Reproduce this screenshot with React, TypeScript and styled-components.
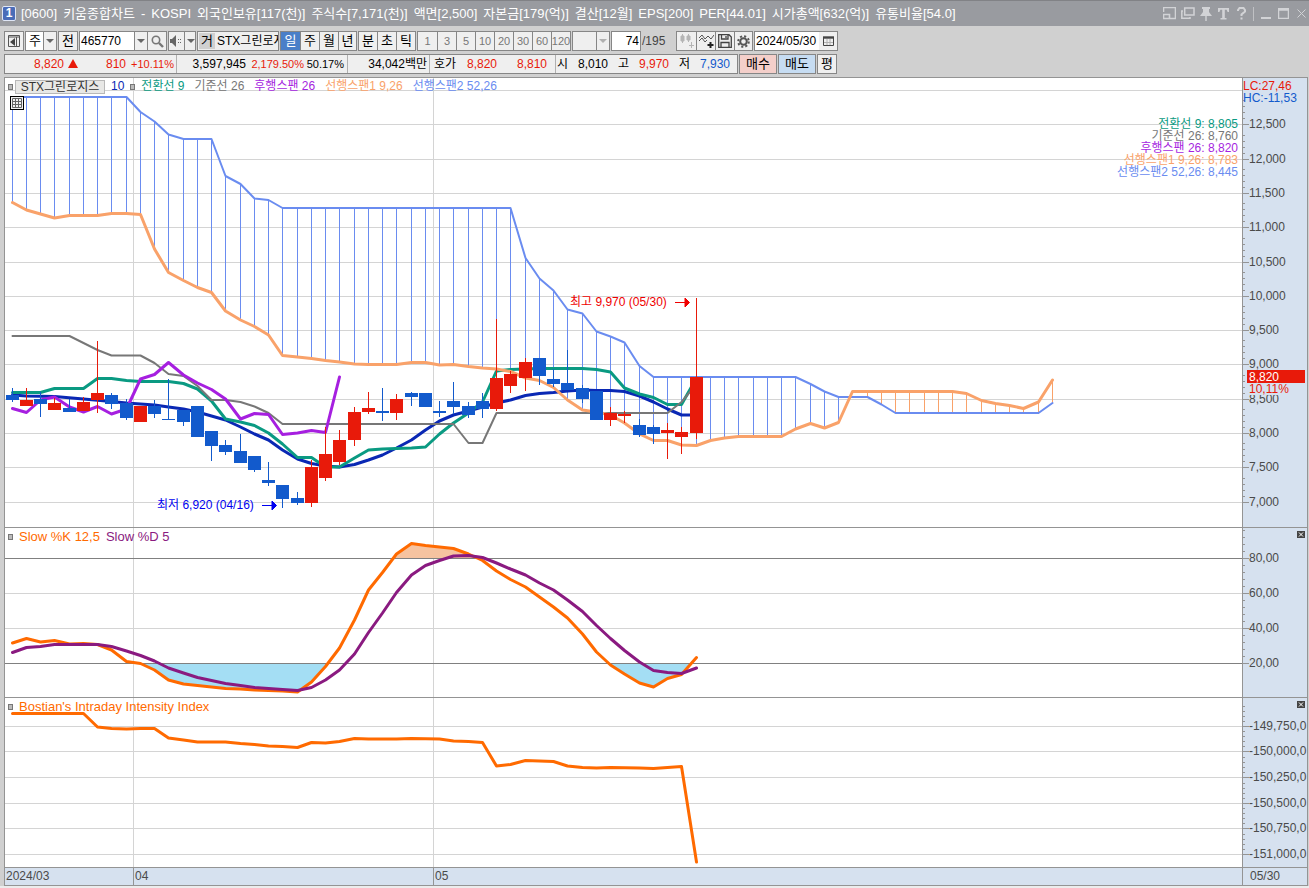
import React from 'react';
import styled, { createGlobalStyle } from 'styled-components';

const SANS = `'Liberation Sans', 'Noto Sans CJK KR', sans-serif`;

const C = {
  up: '#e81a0a',
  down: '#125acc',
  conv: '#0a9a82',
  base: '#777777',
  lag: '#a61fe0',
  spanA: '#f9a26a',
  spanB: '#6a8cf0',
  ma: '#0a28b4',
  grid: '#d4d4d4',
  frame: '#949494',
  axis: '#d6e1ef',
  k: '#ff6a00',
  d: '#8a1a80',
  ink: '#4a4a4a',
};

const Global = createGlobalStyle`
  *, *::before, *::after { box-sizing: border-box; }
  body { margin: 0; background: #ececec; font: 12px/12px ${SANS}; color: #000; }
  button, input, select { font: inherit; color: inherit; margin: 0; padding: 0; border-radius: 0; }
`;

/* ---------- window chrome ---------- */

const Window = styled.div`
  min-height: 100vh;
  display: flex;
  flex-direction: column;
  background: #d0d0d0;
  white-space: nowrap;
  overflow: hidden;
`;

const TitleBar = styled.header`
  display: flex;
  align-items: center;
  height: 26px;
  padding-left: 2px;
  border-top: 1px solid #818286;
  background: #999ba0;
  color: #fff;
`;

const Badge = styled.span`
  width: 14px;
  height: 15px;
  border: 1px solid #dfe6f5;
  border-radius: 2px;
  background: #4a6cb8;
  font-weight: bold;
  line-height: 13px;
  text-align: center;
`;

const Title = styled.h1`
  flex: 1;
  display: flex;
  gap: 6px;
  margin: 0 0 0 5px;
  font-size: 13px;
  font-weight: normal;
  line-height: 16px;
`;

const TitleTools = styled.div`
  display: flex;
  align-items: center;
  gap: 3px;
`;

const TitleButton = styled.button`
  display: flex;
  justify-content: center;
  width: 15px;
  border: 0;
  background: none;
  color: #d2d3d6;
`;

const TitleRule = styled.span`
  width: 1px;
  height: 14px;
  margin: 0 1px;
  background: #c0c1c4;
`;

const ToolRow = styled.div`
  display: flex;
  gap: 1px;
  height: 20px;
  margin: 5px 4px 0;
`;

const QuoteRow = styled(ToolRow)`
  margin: 3px 4px 3px;
`;

const Group = styled.div<{ $width?: number; $white?: boolean }>`
  display: flex;
  flex: none;
  width: ${(p) => (p.$width ? `${p.$width}px` : 'auto')};
  height: 20px;
  overflow: hidden;
  border: 1px solid #868686;
  background: ${(p) => (p.$white ? '#fff' : '#efefef')};
  > button + button, > span + button { border-left: 1px solid #868686; }
`;

const ToolButton = styled.button<{ $width?: number; $active?: boolean; $dim?: boolean; $tone?: string; $framed?: boolean }>`
  display: flex;
  align-items: center;
  justify-content: center;
  width: ${(p) => p.$width ?? 19}px;
  flex: none;
  height: ${(p) => (p.$framed ? 20 : 18)}px;
  border: ${(p) => (p.$framed ? '1px solid #868686' : '0')};
  background: ${(p) => (p.$active ? '#4a7fc8' : p.$tone ?? '#efefef')};
  color: ${(p) => (p.$active ? '#fff' : p.$dim ? '#777' : '#000')};
  font-size: ${(p) => (p.$dim ? 11 : 13)}px;
`;

const Select = styled.select<{ $width: number }>`
  width: ${(p) => p.$width}px;
  height: 18px;
  padding-left: 3px;
  border: 0;
  background: transparent;
  appearance: none;
  font-size: 13px;
`;

const Arrow = styled.span<{ $dim?: boolean }>`
  display: flex;
  align-items: center;
  justify-content: center;
  width: 13px;
  flex: none;
  border-left: 1px solid #868686;
  background: #efefef;
  &::after {
    content: '';
    border: 4px solid transparent;
    border-top-color: ${(p) => (p.$dim ? '#b0b0b0' : '#666')};
    border-bottom: 0;
  }
`;

const Field = styled.input<{ $right?: boolean }>`
  flex: 1;
  min-width: 0;
  height: 18px;
  padding: 0 1px;
  border: 0;
  outline: 0;
  background: #fff;
  text-align: ${(p) => (p.$right ? 'right' : 'left')};
`;

const NameTag = styled.span`
  width: 16px;
  height: 16px;
  flex: none;
  margin: 1px 2px 1px 1px;
  background: #d0d0d0;
  font-size: 13px;
  line-height: 16px;
  text-align: center;
`;

const StockName = styled.span`
  flex: 1;
  min-width: 0;
  overflow: hidden;
  line-height: 18px;
`;

const Count = styled.span`
  width: 33px;
  color: #444;
  line-height: 20px;
`;

/* ---------- quote strip ---------- */

const Quotes = styled.div`
  display: flex;
  width: 734px;
  height: 20px;
  border: 1px solid #868686;
  background: #efefef;
  line-height: 18px;
  > div + div { border-left: 1px solid #b0b0b0; }
`;

const QuoteCell = styled.div<{ $width: number }>`
  display: flex;
  width: ${(p) => p.$width}px;
  flex: none;
`;

const Figure = styled.span<{ $width: number; $tone?: string; $percent?: boolean }>`
  width: ${(p) => p.$width}px;
  flex: none;
  color: ${(p) => p.$tone ?? '#000'};
  font-size: ${(p) => (p.$percent ? 11 : 12)}px;
  text-align: right;
`;

/* ---------- chart ---------- */

const Chart = styled.main`
  margin: 0 1px 0 4px;
  border: 1px solid ${C.frame};
  background: #fff;
`;

const Panel = styled.section<{ $height: number }>`
  display: flex;
  height: ${(p) => p.$height}px;
  border-bottom: 1px solid ${C.frame};
`;

const Plot = styled.div`
  position: relative;
  flex: 1;
  min-width: 0;
`;

const Scale = styled.div`
  position: relative;
  width: 65px;
  border-left: 1px solid ${C.frame};
  background: ${C.axis};
`;

const Svg = styled.svg`
  display: block;
  width: 100%;
  height: 100%;
  overflow: hidden;
  text { font-family: ${SANS}; font-size: 12px; }
`;

const Legend = styled.div<{ $size?: number }>`
  position: absolute;
  top: 1px;
  left: 3px;
  display: flex;
  align-items: center;
  gap: 6px;
  height: 15px;
  font-size: ${(p) => p.$size ?? 12}px;
  line-height: 15px;
`;

const SeriesHead = styled.div`
  display: flex;
  align-items: center;
  gap: 2px;
`;

const Keys = styled.div`
  display: flex;
  gap: 10px;
`;

const Handle = styled.button`
  width: 5px;
  height: 6px;
  flex: none;
  border: 1px solid #777;
  background: #bbb;
`;

const SeriesButton = styled.button`
  width: 90px;
  height: 14px;
  border: 1px solid #b8b8b8;
  background: #e8e8e6;
  color: #333;
  line-height: 12px;
`;

const Key = styled.span<{ $tone: string }>`
  color: ${(p) => p.$tone};
`;

const TableButton = styled.button`
  position: absolute;
  top: 18px;
  left: 5px;
  display: flex;
  align-items: center;
  justify-content: center;
  width: 14px;
  height: 14px;
  border: 1px solid #000;
  background: #f2f2f2;
`;

const Readout = styled.ul`
  position: absolute;
  top: 40px;
  right: 4px;
  margin: 0;
  padding: 0;
  list-style: none;
  line-height: 12px;
  text-align: right;
`;

const CloseButton = styled.button`
  position: absolute;
  top: 3px;
  right: 2px;
  display: flex;
  width: 8px;
  height: 7px;
  border: 0;
  background: #444;
`;

const TimeAxis = styled.footer`
  display: flex;
  height: 17px;
  background: ${C.axis};
  color: ${C.ink};
  line-height: 16px;
  > span + span { border-left: 1px solid ${C.frame}; }
`;

const Month = styled.span<{ $width?: number }>`
  width: ${(p) => (p.$width ? `${p.$width}px` : 'auto')};
  flex: ${(p) => (p.$width ? 'none' : 1)};
  padding-left: 1px;
`;

const LastDay = styled.span`
  width: 65px;
  padding-left: 7px;
`;

const Below = styled.div`
  flex: 1;
  min-height: 2px;
  background: #ececec;
`;

/* ---------- data: [bar index, y] on the shared chart canvas ---------- */

type Pt = [number, number];

const barX = (i: number) => Math.floor(12 + 14.25 * i);
const points = (pts: Pt[]) => pts.map(([i, y]) => `${barX(i) + 0.5},${y}`).join(' ');

const valueAt = (pts: Pt[], i: number) => {
  const n = pts.findIndex(([k]) => k >= i);
  if (pts[n][0] === i) return pts[n][1];
  const [a, ya] = pts[n - 1];
  const [b, yb] = pts[n];
  return ya + ((yb - ya) * (i - a)) / (b - a);
};

const spanA: Pt[] = [[0, 202.5], [1, 210], [2, 214], [3, 218], [4, 215.5], [6, 215.5], [7, 213.5], [8, 213.5], [9, 214.5], [10, 249], [11, 272.5], [12, 280.5], [13, 287.5], [14, 292.5], [15, 311], [16, 320], [17, 326.5], [18, 335], [19, 355.5], [20, 357], [21, 358.5], [22, 360.5], [23, 362], [24, 364], [25, 364.5], [27, 364.5], [28, 362.5], [29, 362.5], [30, 365], [31, 364.5], [32, 366.5], [33, 368], [34, 369], [35, 371.5], [36, 378], [37, 380.5], [38, 387.5], [39, 400], [40, 410], [41, 412], [42, 415], [43, 423], [44, 434], [45, 440.5], [46, 440.5], [47, 445], [48, 445.5], [49, 440.5], [50, 438], [51, 436.5], [54, 436.5], [55, 429], [56, 423.5], [57, 428], [58, 422.5], [59, 391.5], [66, 391.5], [67, 393.5], [68, 400.5], [69, 403.5], [70, 405.5], [71, 408.5], [72, 402], [73, 380]];
const spanB: Pt[] = [[0, 97], [8, 97], [9, 112], [10, 121.5], [11, 134.5], [12, 139], [14, 139], [15, 176], [16, 184], [17, 198.5], [18, 200], [19, 208], [35, 208], [36, 258], [37, 278.5], [38, 290.5], [39, 309.5], [40, 313.5], [41, 331.5], [42, 336.5], [43, 342.5], [44, 366], [45, 377], [55, 377], [56, 384], [57, 391.5], [58, 397], [60, 397], [61, 404.5], [62, 413], [72, 413], [73, 403]];
const movingAvg: Pt[] = [[0, 395], [1, 396], [3, 396.5], [5, 399], [7, 401.5], [8, 403], [9, 404], [10, 405], [11, 407], [12, 409], [13, 412], [14, 416], [15, 420], [16, 427], [17, 434], [18, 440], [19, 450], [20, 459], [21, 463.5], [22, 466], [23, 467], [24, 464.5], [25, 460], [26, 455], [27, 448], [28, 440], [29, 430], [30, 421], [31, 415], [32, 411], [33, 407], [34, 403], [35, 400], [36, 395.5], [37, 393.5], [38, 392.5], [39, 391], [40, 390], [41, 390.5], [42, 390.5], [43, 391.5], [44, 396], [45, 402], [46, 409], [47, 415], [48, 415]];
const conversion: Pt[] = [[0, 392.5], [2, 392.5], [3, 388.5], [5, 388.5], [6, 378.5], [7, 378.5], [8, 380.5], [9, 381.5], [11, 381.5], [12, 383.5], [13, 389], [14, 401], [15, 419], [16, 422], [17, 425.5], [18, 433], [19, 444], [20, 457.5], [21, 457.5], [22, 467], [23, 467], [24, 458], [25, 450], [26, 449], [27, 448.5], [28, 448], [29, 447], [30, 434], [31, 423], [32, 413], [33, 402], [34, 371], [35, 369.5], [37, 368.5], [40, 368.5], [41, 369.5], [42, 372], [43, 388], [44, 394], [45, 397.5], [46, 404.5], [47, 404.5], [48, 378]];
const baseline: Pt[] = [[0, 336], [4, 336], [5, 343], [6, 350], [7, 355.5], [9, 355.5], [10, 363], [11, 374], [12, 376], [13, 386], [14, 400], [15, 400], [16, 402], [17, 406.5], [18, 413], [19, 424], [31, 424], [32, 443], [33, 443], [34, 413], [46, 413], [47, 402], [48, 384]];
const lagging: Pt[] = [[0, 408.5], [1, 412.5], [2, 400], [3, 397], [4, 407], [5, 412], [6, 406.5], [7, 414], [8, 409], [9, 379], [10, 374.5], [11, 362.5], [12, 375], [13, 383], [14, 389.5], [15, 399], [16, 419], [17, 413.5], [18, 414.5], [19, 434.5], [20, 433], [21, 430.5], [22, 432.5], [23, 377]];

const slowK: Pt[] = [[0, 643], [1, 638.5], [2, 642], [3, 640.5], [4, 644], [5, 643.5], [6, 644.5], [7, 650], [8, 661.5], [9, 663.5], [10, 670], [11, 680], [12, 684], [13, 685.5], [14, 687], [15, 688.5], [16, 689], [17, 690], [18, 690.5], [19, 691], [20, 692], [21, 682], [22, 666.5], [23, 648], [24, 620], [25, 590], [26, 572.5], [27, 554], [28, 543.5], [29, 545.5], [30, 547], [31, 548.5], [32, 554], [33, 560.5], [34, 571], [35, 579.5], [36, 587], [37, 597], [38, 607], [39, 618], [40, 634], [41, 652], [42, 665], [43, 674], [44, 683], [45, 687], [46, 678.5], [47, 674.5], [48, 657.5]];
const slowD: Pt[] = [[0, 652.5], [1, 647.5], [2, 646.5], [3, 644.5], [6, 644.5], [7, 646.5], [8, 651], [9, 655.5], [10, 661], [11, 668], [12, 673], [13, 677.5], [14, 680.5], [15, 683.5], [16, 685.5], [17, 687.5], [18, 688.5], [19, 689.5], [20, 690.5], [21, 687.5], [22, 680], [23, 670], [24, 654], [25, 632.5], [26, 613], [27, 592.5], [28, 575], [29, 565.5], [30, 560.5], [31, 556], [32, 555.5], [33, 557.5], [34, 563], [35, 569], [36, 575], [37, 583], [38, 590], [39, 600], [40, 611.5], [41, 625.5], [42, 638.5], [43, 650.5], [44, 662], [45, 670.5], [46, 672.5], [47, 673.5], [48, 668]];
const intensity: Pt[] = [[0, 713.5], [5, 713.5], [6, 727], [7, 728.5], [8, 729], [9, 728.5], [10, 728.5], [11, 738], [12, 740], [13, 742], [15, 742], [16, 743.5], [17, 744.5], [18, 746], [19, 746.5], [20, 747.5], [21, 742.5], [22, 743], [23, 741.5], [24, 738.5], [25, 739], [27, 739], [28, 738.5], [30, 739], [31, 741], [32, 741.5], [33, 742.5], [34, 766], [35, 764.5], [36, 760.5], [38, 761.5], [39, 766], [40, 767.5], [41, 768], [42, 767.5], [44, 768], [45, 768.5], [46, 767.5], [47, 766.5], [48, 862]];

/* [direction, wick top, body top, body bottom, wick bottom] */
type Candle = ['u' | 'd', number, number, number, number];
const candles: Candle[] = [
  ['d', 388, 395, 400, 402], ['u', 388, 400, 406, 406], ['d', 392, 399, 404, 417], ['u', 398, 403, 410, 410],
  ['d', 399, 408, 412, 412], ['u', 397, 402, 411, 411], ['u', 341, 393, 400, 413], ['d', 393, 395, 404, 409],
  ['d', 399, 403, 418, 420], ['u', 406, 406, 422, 422], ['d', 400, 406, 414, 418], ['d', 379, 419, 420, 420],
  ['d', 410, 410, 422, 426], ['d', 406, 406, 437, 437], ['d', 431, 431, 446, 461], ['d', 440, 445, 452, 455],
  ['d', 434, 451, 463, 463], ['d', 456, 456, 470, 472], ['d', 462, 480, 483, 486], ['d', 485, 485, 499, 508],
  ['d', 492, 498, 503, 505], ['u', 460, 467, 503, 507], ['u', 427, 454, 478, 481], ['u', 430, 440, 462, 465],
  ['u', 407, 412, 440, 446], ['u', 392, 408, 412, 414], ['d', 388, 411, 413, 421], ['u', 394, 399, 413, 420],
  ['d', 392, 393, 397, 406], ['d', 393, 393, 407, 407], ['d', 401, 411, 413, 417], ['d', 382, 401, 407, 414],
  ['d', 402, 406, 415, 418], ['d', 393, 401, 409, 418], ['u', 319, 378, 409, 411], ['u', 371, 374, 386, 393],
  ['u', 358, 362, 378, 391], ['d', 358, 358, 376, 385], ['d', 369, 379, 384, 387], ['d', 350, 383, 390, 390],
  ['d', 385, 388, 399, 403], ['d', 391, 391, 420, 420], ['u', 407, 413, 420, 426], ['u', 411, 414, 416, 423],
  ['d', 419, 425, 435, 437], ['d', 425, 427, 434, 444], ['u', 423, 430, 433, 459], ['u', 427, 432, 437, 454],
  ['u', 298, 377, 433, 439],
];

const priceMarks: [number, string][] = [[124, '12,500'], [159, '12,000'], [193, '11,500'], [227, '11,000'], [262, '10,500'], [296, '10,000'], [330, '9,500'], [364, '9,000'], [399, '8,500'], [433, '8,000'], [467, '7,500'], [502, '7,000']];
const slowMarks: [number, string][] = [[558, '80,00'], [593, '60,00'], [628, '40,00'], [663, '20,00']];
const intensityMarks: [number, string][] = [[726, '-149,750,0'], [751, '-150,000,0'], [777, '-150,250,0'], [803, '-150,500,0'], [828, '-150,750,0'], [854, '-151,000,0']];

const LEFT = 5;
const PRICE_TOP = 78;
const SLOW_TOP = 528;
const INTENSITY_TOP = 698;

/* ---------- chart pieces ---------- */

function Grid({ top, rows, strong = [] }: { top: number; rows: number[]; strong?: number[] }) {
  return (
    <g shapeRendering="crispEdges">
      {rows.map((y) => (
        <line key={y} x1="0" x2="100%" y1={y - top + 0.5} y2={y - top + 0.5} stroke={C.grid} />
      ))}
      {[133, 433].map((x) => (
        <line key={x} x1={x - LEFT + 0.5} x2={x - LEFT + 0.5} y1="0" y2="100%" stroke={C.grid} />
      ))}
      {strong.map((y) => (
        <line key={y} x1="0" x2="100%" y1={y - top + 0.5} y2={y - top + 0.5} stroke="#808080" />
      ))}
    </g>
  );
}

function Line({ data, tone, width = 3 }: { data: Pt[]; tone: string; width?: number }) {
  return <polyline points={points(data)} fill="none" stroke={tone} strokeWidth={width} strokeLinejoin="round" strokeLinecap="round" />;
}

function Ticks({ top, marks, step }: { top: number; marks: [number, string][]; step: number }) {
  return (
    <g>
      {marks.map(([y, label]) => (
        <g key={label}>
          <g stroke={C.frame} shapeRendering="crispEdges">
            <line x1="0" x2="6" y1={y - top + 0.5} y2={y - top + 0.5} />
            {[1, 2, 3, 4].map((n) => (
              <line key={n} x1="0" x2="2" y1={y - top - n * step + 0.5} y2={y - top - n * step + 0.5} />
            ))}
          </g>
          <text x="6" y={y - top + 4} fill={C.ink}>{label}</text>
        </g>
      ))}
    </g>
  );
}

function Cloud() {
  return (
    <g strokeWidth="1" shapeRendering="crispEdges">
      {Array.from({ length: 74 }, (_, i) => i).filter((i) => i !== 59).map((i) => (
        <line key={i} x1={barX(i) + 0.5} x2={barX(i) + 0.5} y1={valueAt(spanA, i)} y2={valueAt(spanB, i)} stroke={i < 59 ? C.spanB : C.spanA} />
      ))}
    </g>
  );
}

function Candles() {
  return (
    <g shapeRendering="crispEdges">
      {candles.map(([dir, hi, top, bottom, lo], i) => (
        <g key={i} fill={dir === 'u' ? C.up : C.down}>
          <rect x={barX(i)} y={hi} width="1" height={lo - hi} />
          <rect x={barX(i) - 6} y={top} width="13" height={bottom - top} />
        </g>
      ))}
    </g>
  );
}

function ClosePane({ label }: { label: string }) {
  return (
    <CloseButton aria-label={label}>
      <svg width="8" height="7" viewBox="0 0 8 7" stroke="#fff" fill="none"><path d="M2 1.5 6 5.5M6 1.5 2 5.5" /></svg>
    </CloseButton>
  );
}

const titleParts = ['[0600]', '키움종합차트', '-', 'KOSPI', '외국인보유[117(천)]', '주식수[7,171(천)]', '액면[2,500]', '자본금[179(억)]', '결산[12월]', 'EPS[200]', 'PER[44.01]', '시가총액[632(억)]', '유통비율[54.0]'];

export default function App() {
  const slowFirst = barX(0) + 0.5;
  const slowLast = barX(48) + 0.5;
  return (
    <Window>
      <Global />
      <TitleBar>
        <Badge>1</Badge>
        <Title>{titleParts.map((part) => <span key={part}>{part}</span>)}</Title>
        <TitleTools>
          <TitleButton aria-label="창 크기"><svg width="13" height="13" fill="none" stroke="currentColor"><path d="M.5 5V.5H12.5V11.5H6M.5 7.5H6.5V11.5H.5Z" strokeWidth="1.6" /></svg></TitleButton>
          <TitleButton aria-label="창 복제"><svg width="14" height="13" fill="none" stroke="currentColor" strokeWidth="1.5"><path d="M3.7 1H13V8H3.7ZM2 4H.8V11.3H9V10" /></svg></TitleButton>
          <TitleButton aria-label="고정"><svg width="12" height="14" fill="currentColor"><path d="M2 0H10V2H9V5L12 9H0L3 5V2H2ZM5.3 9H6.7V14H5.3Z" /></svg></TitleButton>
          <TitleButton aria-label="글꼴"><svg width="11" height="12" fill="currentColor"><path d="M0 0H11V4H9.6L8.6 1.8H6.8V10H8.5V11.5H2.5V10H4.2V1.8H2.4L1.4 4H0Z" /></svg></TitleButton>
          <TitleButton aria-label="도움말"><svg width="9" height="13" fill="none" stroke="currentColor" strokeWidth="2"><path d="M1 4V3L2.5 1H6.5L8 3V4.5L4.5 7.5V9M4.5 10.5V12.5" /></svg></TitleButton>
          <TitleRule />
          <TitleButton aria-label="최소화"><svg width="10" height="13"><path d="M0 10H10V12H0Z" fill="currentColor" /></svg></TitleButton>
          <TitleButton aria-label="최대화"><svg width="11" height="11" fill="none" stroke="currentColor"><path d="M.5.5H10.5V10.5H.5ZM0 2H11" strokeWidth="1.5" /></svg></TitleButton>
          <TitleButton aria-label="닫기"><svg width="9" height="9" stroke="currentColor"><path d="M.5.5 8.5 8.5M8.5.5.5 8.5" /></svg></TitleButton>
        </TitleTools>
      </TitleBar>

      <ToolRow>
        <ToolButton $framed $width={20} aria-label="메뉴 보기">
          <svg width="12" height="12" fill="none" stroke="#555"><path d="M.5.5H11.5V11.5H.5ZM0 2H12M8.5 2V11" /><path d="M7 3V11L2 7Z" fill="#444" stroke="none" /></svg>
        </ToolButton>
        <Group $width={32} $white>
          <Select $width={17} aria-label="종목 구분" defaultValue="주"><option>주</option></Select>
          <Arrow />
        </Group>
        <ToolButton $framed $width={20}>전</ToolButton>
        <Group $width={88}>
          <Field aria-label="종목코드" defaultValue="465770" />
          <Arrow />
          <ToolButton aria-label="종목 검색">
            <svg width="13" height="13" fill="none" stroke="#777" strokeWidth="1.6"><circle cx="5" cy="5" r="3.7" /><path d="M8 8 12 12" strokeWidth="2.4" /></svg>
          </ToolButton>
        </Group>
        <Group $width={28}>
          <ToolButton $width={15} aria-label="소리">
            <svg width="13" height="12" fill="#666"><path d="M0 4H2L6 0V12L2 8H0Z" /><path d="M8 4h1v1H8zM8 7h1v1H8zM10 4h1v1h-1zM10 7h1v1h-1z" /></svg>
          </ToolButton>
          <Arrow />
        </Group>
        <Group $width={82}>
          <NameTag>거</NameTag>
          <StockName>STX그린로지</StockName>
        </Group>
        <Group $width={77}>
          <ToolButton $active>일</ToolButton><ToolButton>주</ToolButton><ToolButton>월</ToolButton><ToolButton $width={18}>년</ToolButton>
        </Group>
        <Group $width={58}>
          <ToolButton $width={18}>분</ToolButton><ToolButton>초</ToolButton><ToolButton>틱</ToolButton>
        </Group>
        <Group $width={154}>
          {['1', '3', '5', '10', '20', '30', '60', '120'].map((n) => <ToolButton key={n} $dim>{n}</ToolButton>)}
        </Group>
        <Group $width={38}>
          <Select $width={23} aria-label="분틱 주기" disabled />
          <Arrow $dim />
        </Group>
        <Group $width={30} $white>
          <Field $right aria-label="조회 개수" defaultValue="74" />
        </Group>
        <Count>/195</Count>
        <Group $width={77}>
          <ToolButton aria-label="차트 형태"><svg width="14" height="14" stroke="#b5b5b5"><path d="M2.5 0V9M8.5 0V8M11.5 8V14M9 11.5H14" /><path d="M1 2H4V7H1ZM7 2H10V6H7Z" fill="#b5b5b5" /></svg></ToolButton>
          <ToolButton aria-label="지표 추가"><svg width="15" height="14" fill="none" stroke="#555"><path d="M0 4 3 1 6 5 9 2 12 5 15 1M0 7 3 4 6 8 8 6" /><path d="M11.5 8V14M8.5 11H14.5" strokeWidth="2" stroke="#222" /></svg></ToolButton>
          <ToolButton aria-label="저장"><svg width="14" height="14" fill="none" stroke="#444"><path d="M.7.7H11L13.3 3V13.3H.7ZM3.5.7V5H10V.7M3 13V8.5H11V13M8 2V4" strokeWidth="1.3" /></svg></ToolButton>
          <ToolButton $width={18} aria-label="설정"><svg width="13" height="13" fill="none" stroke="#555"><circle cx="6.5" cy="6.5" r="3.3" strokeWidth="2" /><circle cx="6.5" cy="6.5" r="5.3" strokeWidth="2" strokeDasharray="2.1 2.06" /></svg></ToolButton>
        </Group>
        <Group $width={84} $white>
          <Field aria-label="조회 일자" defaultValue="2024/05/30" />
          <ToolButton $width={18} aria-label="달력"><svg width="11" height="10" fill="none" stroke="#444"><path d="M.5 1V9.5H10.5V1" /><path d="M0 1.5H11" strokeWidth="2.4" /><path d="M1 6.5H10M4 3V9M7 3V9" stroke="#b0b0b0" /></svg></ToolButton>
        </Group>
      </ToolRow>

      <QuoteRow>
        <Quotes>
          <QuoteCell $width={171}>
            <Figure $width={59} $tone={C.up}>8,820</Figure>
            <Figure $width={14} $tone={C.up}><svg width="10" height="9"><path d="M5 0 10 9H0Z" fill={C.up} /></svg></Figure>
            <Figure $width={48} $tone={C.up}>810</Figure>
            <Figure $width={48} $tone={C.up} $percent>+10.11%</Figure>
          </QuoteCell>
          <QuoteCell $width={171}>
            <Figure $width={69}>3,597,945</Figure>
            <Figure $width={58} $tone={C.up} $percent>2,179.50%</Figure>
            <Figure $width={40} $percent>50.17%</Figure>
          </QuoteCell>
          <QuoteCell $width={82}><Figure $width={79}>34,042백만</Figure></QuoteCell>
          <QuoteCell $width={126}>
            <Figure $width={26}>호가</Figure>
            <Figure $width={41} $tone={C.up}>8,820</Figure>
            <Figure $width={50} $tone={C.up}>8,810</Figure>
          </QuoteCell>
          <QuoteCell $width={182}>
            <Figure $width={12}>시</Figure>
            <Figure $width={40}>8,010</Figure>
            <Figure $width={21}>고</Figure>
            <Figure $width={40} $tone={C.up}>9,970</Figure>
            <Figure $width={21}>저</Figure>
            <Figure $width={40} $tone={C.down}>7,930</Figure>
          </QuoteCell>
        </Quotes>
        <ToolButton $framed $width={38} $tone="#f4cfca">매수</ToolButton>
        <ToolButton $framed $width={38} $tone="#c6dcf2">매도</ToolButton>
        <ToolButton $framed $width={20}>평</ToolButton>
      </QuoteRow>

      <Chart>
        <Panel $height={450}>
          <Plot>
            <Svg role="img" aria-label="가격 차트">
              <Grid top={PRICE_TOP} rows={[90, ...priceMarks.map(([y]) => y)]} />
              <g transform={`translate(${-LEFT} ${-PRICE_TOP})`}>
                <Cloud />
                <Line data={spanB} tone={C.spanB} width={2} />
                <Line data={movingAvg} tone={C.ma} />
                <Line data={conversion} tone={C.conv} />
                <Line data={baseline} tone={C.base} width={2} />
                <Line data={lagging} tone={C.lag} />
                <Line data={spanA} tone={C.spanA} />
                <Candles />
                <g fill="#0000f0" stroke="#0000f0">
                  <text x="157" y="509" stroke="none">최저 6,920 (04/16)</text>
                  <path d="M262 505.5H272M272 501 276.5 505.5 272 510Z" />
                </g>
                <g fill="#f00000" stroke="#f00000">
                  <text x="570" y="306" stroke="none">최고 9,970 (05/30)</text>
                  <path d="M675 302.5H685M685 298 689.5 302.5 685 307Z" />
                </g>
              </g>
            </Svg>
            <Legend>
              <SeriesHead>
                <Handle aria-label="종목 선택" />
                <SeriesButton>STX그린로지스</SeriesButton>
              </SeriesHead>
              <Key $tone={C.ma}>10</Key>
              <Handle aria-label="지표 선택" />
              <Keys>
                <Key $tone={C.conv}>전환선 9</Key>
                <Key $tone={C.base}>기준선 26</Key>
                <Key $tone={C.lag}>후행스팬 26</Key>
                <Key $tone={C.spanA}>선행스팬1 9,26</Key>
                <Key $tone={C.spanB}>선행스팬2 52,26</Key>
              </Keys>
            </Legend>
            <TableButton aria-label="데이터 표">
              <svg width="10" height="10" fill="none" stroke="#666"><path d="M.5.5H9.5V9.5H.5ZM0 3.5H10M0 6.5H10M3.5 0V10M6.5 0V10" /></svg>
            </TableButton>
            <Readout>
              <li><Key $tone={C.conv}>전환선 9: 8,805</Key></li>
              <li><Key $tone={C.base}>기준선 26: 8,760</Key></li>
              <li><Key $tone={C.lag}>후행스팬 26: 8,820</Key></li>
              <li><Key $tone={C.spanA}>선행스팬1 9,26: 8,783</Key></li>
              <li><Key $tone={C.spanB}>선행스팬2 52,26: 8,445</Key></li>
            </Readout>
          </Plot>
          <Scale>
            <Svg role="img" aria-label="가격 눈금">
              <Ticks top={PRICE_TOP} marks={priceMarks} step={6} />
              <rect x="4" y="292" width="58" height="13" fill={C.up} />
              <text x="6" y="303" fill="#fff">8,820</text>
              <rect x="6" y="305" width="42" height="12" fill={C.axis} />
              <text x="6" y="315" fill={C.up}>10,11%</text>
              <text x="0" y="12" fill={C.up}>LC:27,46</text>
              <text x="0" y="24" fill={C.down}>HC:-11,53</text>
            </Svg>
          </Scale>
        </Panel>

        <Panel $height={170}>
          <Plot>
            <Svg role="img" aria-label="스토캐스틱 차트">
              <clipPath id="over"><rect x="0" y="528" width="1300" height="30" /></clipPath>
              <clipPath id="under"><rect x="0" y="664" width="1300" height="34" /></clipPath>
              <Grid top={SLOW_TOP} rows={[593, 628]} strong={[558, 663]} />
              <g transform={`translate(${-LEFT} ${-SLOW_TOP})`}>
                <polygon clipPath="url(#over)" fill="#f6c3a0" points={`${slowFirst},558 ${points(slowK)} ${slowLast},558`} />
                <polygon clipPath="url(#under)" fill="#a4def4" points={`${slowFirst},663 ${points(slowK)} ${slowLast},663`} />
                <Line data={slowK} tone={C.k} />
                <Line data={slowD} tone={C.d} />
              </g>
            </Svg>
            <Legend $size={13}>
              <Handle aria-label="스토캐스틱 선택" />
              <Key $tone={C.k}>Slow %K 12,5</Key>
              <Key $tone={C.d}>Slow %D 5</Key>
            </Legend>
          </Plot>
          <Scale>
            <Svg role="img" aria-label="스토캐스틱 눈금"><Ticks top={SLOW_TOP} marks={slowMarks} step={7} /></Svg>
            <ClosePane label="스토캐스틱 닫기" />
          </Scale>
        </Panel>

        <Panel $height={170}>
          <Plot>
            <Svg role="img" aria-label="일중 강도 지수 차트">
              <Grid top={INTENSITY_TOP} rows={intensityMarks.map(([y]) => y)} />
              <g transform={`translate(${-LEFT} ${-INTENSITY_TOP})`}><Line data={intensity} tone={C.k} /></g>
            </Svg>
            <Legend $size={13}>
              <Handle aria-label="강도 지수 선택" />
              <Key $tone={C.k}>Bostian's Intraday Intensity Index</Key>
            </Legend>
          </Plot>
          <Scale>
            <Svg role="img" aria-label="강도 지수 눈금"><Ticks top={INTENSITY_TOP} marks={intensityMarks} step={5} /></Svg>
            <ClosePane label="강도 지수 닫기" />
          </Scale>
        </Panel>

        <TimeAxis>
          <Month $width={128}>2024/03</Month>
          <Month $width={300}>04</Month>
          <Month>05</Month>
          <LastDay>05/30</LastDay>
        </TimeAxis>
      </Chart>
      <Below />
    </Window>
  );
}
